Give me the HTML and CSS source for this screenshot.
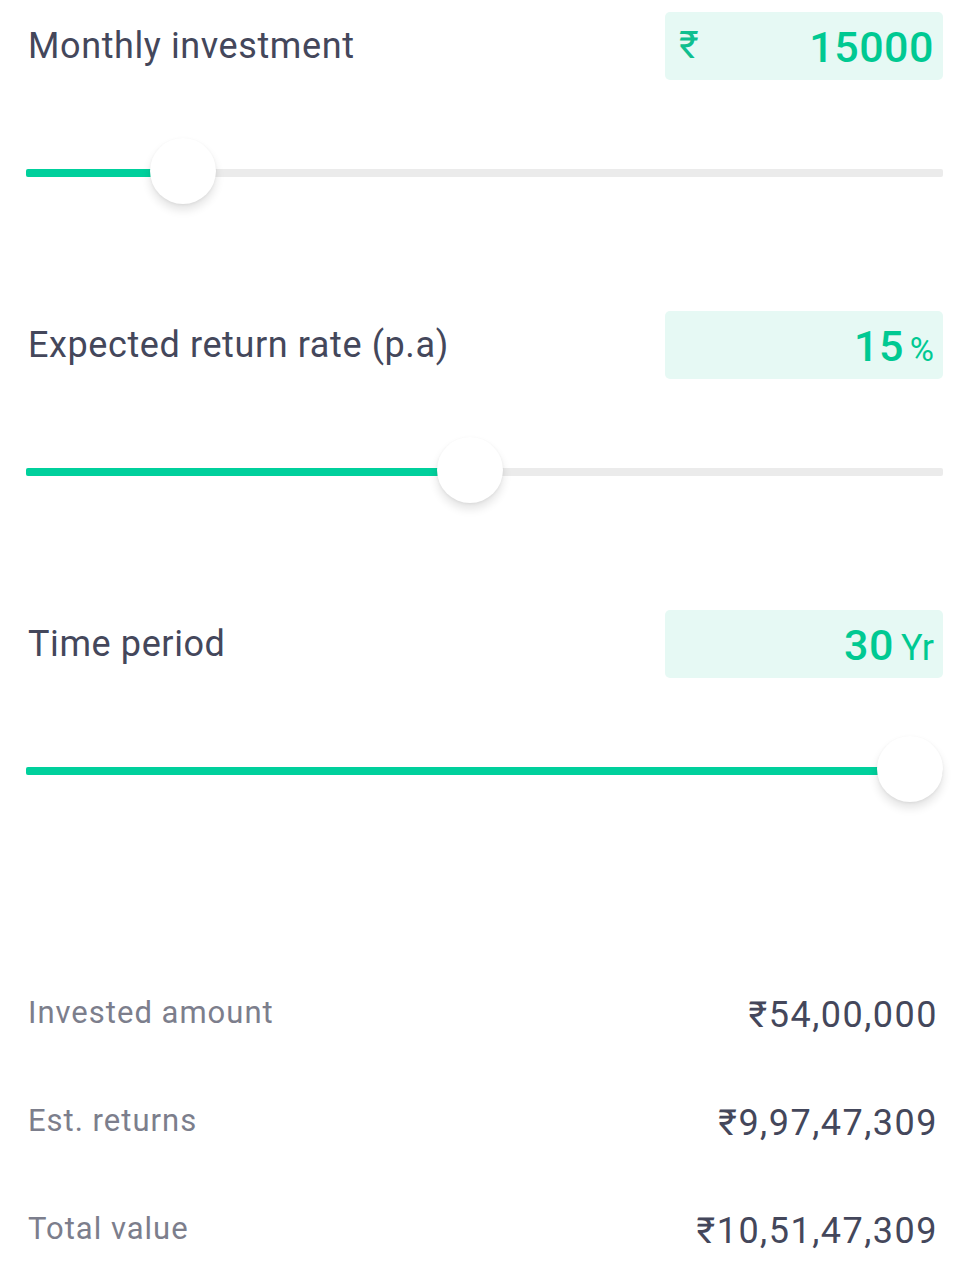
FILE: index.html
```html
<!DOCTYPE html>
<html>
<head>
<meta charset="utf-8">
<link rel="stylesheet" href="styles.css">
</head>
<body>
<div class="calc">
  <section class="field">
    <div class="field-head">
      <span class="field-label">Monthly investment</span>
      <div class="field-box"><span class="prefix">₹</span><span class="val">15000</span></div>
    </div>
    <div class="slider" style="--p:0.1457">
      <div class="track"></div>
      <div class="fill"></div>
      <div class="thumb"></div>
    </div>
  </section>
  <section class="field">
    <div class="field-head">
      <span class="field-label">Expected return rate (p.a)</span>
      <div class="field-box"><span class="val">15</span><span class="unit pct">%</span></div>
    </div>
    <div class="slider" style="--p:0.4828">
      <div class="track"></div>
      <div class="fill"></div>
      <div class="thumb"></div>
    </div>
  </section>
  <section class="field">
    <div class="field-head">
      <span class="field-label">Time period</span>
      <div class="field-box"><span class="val">30</span><span class="unit">Yr</span></div>
    </div>
    <div class="slider" style="--p:1">
      <div class="track"></div>
      <div class="fill"></div>
      <div class="thumb"></div>
    </div>
  </section>

  <div class="results">
    <div class="row"><span class="r-label">Invested amount</span><span class="r-val">₹54,00,000</span></div>
    <div class="row"><span class="r-label">Est. returns</span><span class="r-val">₹9,97,47,309</span></div>
    <div class="row"><span class="r-label">Total value</span><span class="r-val">₹10,51,47,309</span></div>
  </div>
</div>
</body>
</html>
```

FILE: styles.css
```css
* { box-sizing: border-box; }
html, body { margin: 0; padding: 0; background: #ffffff; }
body {
  font-family: Roboto, "Noto Sans", "Liberation Sans", sans-serif;
  color: #44475b;
}
.calc {
  padding: 12px 27px 0 26px;
}
.field {
  height: 299px;
}
.field-head {
  display: flex;
  justify-content: space-between;
  align-items: center;
  height: 68px;
}
.field-label {
  font-size: 36px;
  color: #44475b;
  padding-left: 2px;
  letter-spacing: 0.6px;
}
.field-box {
  width: 278px;
  height: 68px;
  background: #e6f9f4;
  border-radius: 5px;
  display: flex;
  align-items: baseline;
  justify-content: flex-end;
  padding: 10px 9px 0 14px;
  color: #00d09c;
  line-height: 50px;
}
.prefix {
  font-size: 38px;
  line-height: 1;
  align-self: flex-start;
  margin-top: 4px;
  margin-right: auto;
  color: #0fbf8f;
}
.val {
  font-size: 43px;
  font-weight: 500;
  color: #00c992;
  letter-spacing: 0.5px;
}
.unit {
  font-size: 36px;
  margin-left: 7px;
  color: #00c992;
}
.unit.pct {
  font-size: 33px;
  margin-left: 6px;
}
.slider {
  position: relative;
  height: 66px;
  margin-top: 58px;
}
.track {
  position: absolute;
  left: 0; right: 0;
  top: 31px;
  height: 8px;
  background: #ebebeb;
  border-radius: 2px;
}
.fill {
  position: absolute;
  left: 0;
  top: 31px;
  height: 8px;
  width: calc(var(--p) * (100% - 66px) + 33px);
  background: #00d09c;
  border-radius: 2px;
}
.thumb {
  position: absolute;
  top: 0;
  left: calc(var(--p) * (100% - 66px));
  width: 66px;
  height: 66px;
  border-radius: 50%;
  background: #ffffff;
  box-shadow: 0 6px 10px rgba(0,0,0,0.11), 0 1px 3px rgba(0,0,0,0.06);
}
.results {
  margin-top: 49px;
  padding-right: 5px;
}
.row {
  height: 108px;
  display: flex;
  justify-content: space-between;
  align-items: center;
}
.r-label {
  font-size: 31px;
  color: #7c7e8c;
  padding-left: 2px;
  letter-spacing: 1px;
}
.r-val {
  font-size: 36px;
  color: #44475b;
  letter-spacing: 1.5px;
  margin-top: 6px;
}
```
